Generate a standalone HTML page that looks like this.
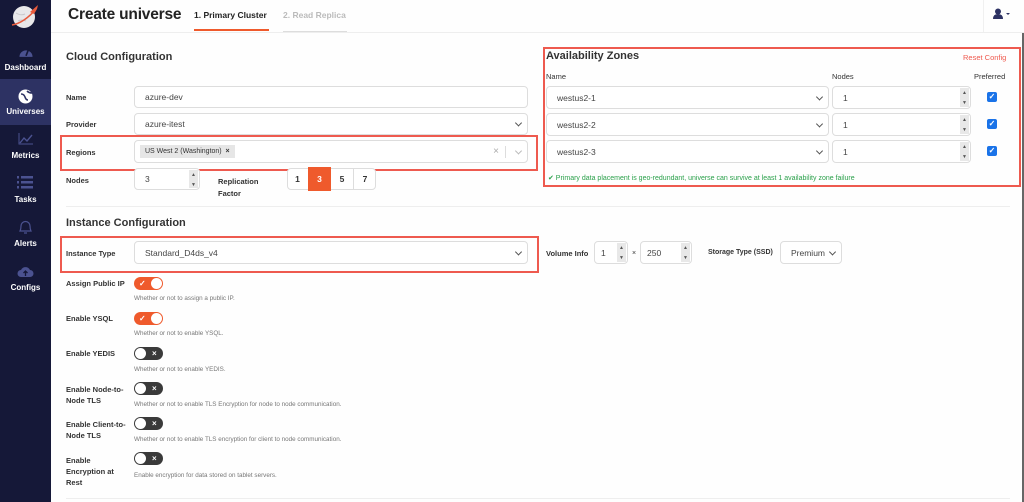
<!DOCTYPE html>
<html><head><meta charset="utf-8"><style>
*{box-sizing:border-box;margin:0;padding:0}
body{width:1024px;height:502px;overflow:hidden;background:#fefefe;font-family:"Liberation Sans",sans-serif;color:#333;position:relative}
.a{position:absolute}
.sb{left:0;top:0;width:51px;height:502px;background:#151838}
.ni{position:absolute;left:0;width:51px;text-align:center;color:#fff;font-size:8px;font-weight:bold}
.lbl{position:absolute;font-size:7.5px;font-weight:bold;color:#333}
.inp{position:absolute;border:1px solid #ddd;border-radius:4px;background:#fff;font-size:8.5px;color:#444;padding-left:10px;display:flex;align-items:center}
.chev{position:absolute;right:6px;top:50%;width:5px;height:5px;border-right:1.3px solid #555;border-bottom:1.3px solid #555;transform:translateY(-70%) rotate(45deg)}
.spin{position:absolute;right:1px;top:1px;bottom:1px;width:9px;background:#e8e8e8;font-size:5px;color:#555;text-align:center;line-height:10px}
.red{position:absolute;border:2px solid #ee5a4f}
.tg{position:absolute;width:29px;height:13px;border-radius:7px}
.tg.on{background:#ef5a2c}.tg.off{background:#3a3a3a}
.tg .k{position:absolute;top:1px;width:11px;height:11px;border-radius:50%;background:#fff}
.tg.on .k{right:1px}.tg.off .k{left:1px}
.tg span{position:absolute;top:0;font-size:8px;color:#fff;font-weight:bold;line-height:13px}
.desc{position:absolute;left:134px;font-size:6.3px;color:#777}
.cb{position:absolute;left:987px;width:10px;height:10px;background:#1a73e8;border-radius:2px;color:#fff;font-size:8px;line-height:10px;text-align:center;font-weight:bold}
</style></head><body>
<div class="a sb"></div>
<div class="a" style="left:0;top:79px;width:51px;height:46px;background:#2d3263"></div>
<svg class="a" style="left:10px;top:3px" width="32" height="28" viewBox="0 0 32 28"><circle cx="14" cy="14" r="11" fill="#e8e8ea"/><path d="M6 10q5 3 9 1 M8 18q4-2 8 0" stroke="#c8c8cc" fill="none"/><path d="M2 22 Q14 20 26 6" stroke="#e85a3c" stroke-width="1.5" fill="none"/><path d="M20 9 L28 2 L27 6 L24 11z" fill="#e85a3c"/></svg>
<svg class="a" style="left:18px;top:46px" width="16" height="12" viewBox="0 0 14 11"><path d="M1 10 A6 6 0 1 1 13 10z" fill="#4b5290"/><path d="M7 9 L9 4" stroke="#151838" stroke-width="1.5"/></svg>
<div class="ni" style="top:63px">Dashboard</div>
<svg class="a" style="left:18px;top:89px" width="15" height="15"><circle cx="7.5" cy="7.5" r="7" fill="#fff"/><path d="M3 5q3 0 4 3t3 3M9 2q2 2 5 2" stroke="#2d3263" stroke-width="1.6" fill="none"/></svg>
<div class="ni" style="top:107px">Universes</div>
<svg class="a" style="left:18px;top:133px" width="16" height="12"><path d="M1 0V11H15" stroke="#4b5290" fill="none"/><path d="M2 10 L6 5 L9 8 L14 2" stroke="#4b5290" stroke-width="1.4" fill="none"/></svg>
<div class="ni" style="top:151px">Metrics</div>
<svg class="a" style="left:17px;top:176px" width="16" height="13"><g fill="#4b5290"><rect x="0" y="0" width="2" height="2.5"/><rect x="4" y="0" width="12" height="2.5"/><rect x="0" y="5" width="2" height="2.5"/><rect x="4" y="5" width="12" height="2.5"/><rect x="0" y="10" width="2" height="2.5"/><rect x="4" y="10" width="12" height="2.5"/></g></svg>
<div class="ni" style="top:195px">Tasks</div>
<svg class="a" style="left:18px;top:220px" width="15" height="15"><path d="M2 11 Q3 9 3 6 A4.5 4.5 0 0 1 12 6 Q12 9 13 11z M6 13h3" stroke="#4b5290" fill="none" stroke-width="1.2"/></svg>
<div class="ni" style="top:239px">Alerts</div>
<svg class="a" style="left:17px;top:265px" width="17" height="13"><path d="M4 12 A3.5 3.5 0 0 1 4 5 A5 5 0 0 1 13 5 A3.5 3.5 0 0 1 13 12z" fill="#4b5290"/><path d="M8.5 11V6 M6.5 8l2-2 2 2" stroke="#151838" stroke-width="1.3" fill="none"/></svg>
<div class="ni" style="top:283px">Configs</div>

<div class="a" style="left:51px;top:32px;width:973px;height:1px;background:#eee"></div>
<div class="a" style="left:68px;top:6px;font-size:15.5px;font-weight:bold;color:#222;letter-spacing:-0.2px">Create universe</div>
<div class="a" style="left:194px;top:10px;font-size:8.5px;font-weight:bold;color:#222">1. Primary Cluster</div>
<div class="a" style="left:194px;top:29px;width:75px;height:2px;background:#ef5a2c"></div>
<div class="a" style="left:283px;top:10px;font-size:8.5px;font-weight:bold;color:#bbb">2. Read Replica</div>
<div class="a" style="left:283px;top:31px;width:64px;height:1px;background:#ddd"></div>
<div class="a" style="left:983px;top:0;width:1px;height:32px;background:#f0f0f0"></div>
<svg class="a" style="left:993px;top:8px" width="18" height="12"><circle cx="5" cy="3.5" r="3" fill="#2d3263"/><path d="M0 11 Q0 6 5 6 Q10 6 10 11z" fill="#2d3263"/><path d="M13 5h4l-2 2z" fill="#2d3263"/></svg>
<div class="a" style="left:1022px;top:33px;width:2px;height:469px;background:#666"></div>

<div class="a" style="left:66px;top:51px;font-size:11px;font-weight:bold;color:#333">Cloud Configuration</div>
<div class="lbl" style="left:66px;top:93px">Name</div>
<div class="inp" style="left:134px;top:86px;width:394px;height:22px">azure-dev</div>
<div class="lbl" style="left:66px;top:120px">Provider</div>
<div class="inp" style="left:134px;top:113px;width:394px;height:22px">azure-itest<i class="chev"></i></div>
<div class="lbl" style="left:66px;top:148px">Regions</div>
<div class="inp" style="left:134px;top:140px;width:394px;height:23px;padding-left:5px"><span style="background:#e6e6e6;padding:3px 5px;font-size:7px;color:#333">US West 2 (Washington) &nbsp;<b>×</b></span><span style="position:absolute;right:28px;color:#aaa;font-size:10px">×</span><span style="position:absolute;right:21px;top:5px;width:1px;height:12px;background:#ddd"></span><i class="chev" style="border-color:#bbb"></i></div>
<div class="red" style="left:60px;top:135px;width:478px;height:36px"></div>
<div class="lbl" style="left:66px;top:176px">Nodes</div>
<div class="inp" style="left:134px;top:168px;width:66px;height:22px">3<div class="spin">▲<br>▼</div></div>
<div class="lbl" style="left:218px;top:176px;line-height:12px">Replication<br>Factor</div>
<div class="a" style="left:287px;top:168px;width:89px;height:22px;border:1px solid #ddd;border-radius:4px;background:#fff"></div>
<div class="a" style="left:287px;top:168px;width:21px;height:22px;line-height:22px;text-align:center;font-size:8.5px;font-weight:bold">1</div>
<div class="a" style="left:308px;top:167px;width:23px;height:24px;line-height:24px;text-align:center;font-size:8.5px;font-weight:bold;background:#ef5a2c;color:#fff">3</div>
<div class="a" style="left:331px;top:168px;width:22px;height:22px;line-height:22px;text-align:center;font-size:8.5px;font-weight:bold">5</div>
<div class="a" style="left:353px;top:168px;width:1px;height:22px;background:#ddd"></div>
<div class="a" style="left:354px;top:168px;width:22px;height:22px;line-height:22px;text-align:center;font-size:8.5px;font-weight:bold">7</div>

<div class="a" style="left:66px;top:206px;width:944px;height:1px;background:#eee"></div>

<div class="a" style="left:546px;top:50px;font-size:11px;font-weight:bold;color:#333">Availability Zones</div>
<div class="a" style="left:963px;top:53px;font-size:7.5px;color:#ef5a4f">Reset Config</div>
<div class="lbl" style="left:546px;top:72px;font-weight:normal;color:#333">Name</div>
<div class="lbl" style="left:832px;top:72px;font-weight:normal">Nodes</div>
<div class="lbl" style="left:974px;top:72px;font-weight:normal">Preferred</div>
<div class="inp" style="left:546px;top:86px;width:283px;height:23px">westus2-1<i class="chev"></i></div>
<div class="inp" style="left:832px;top:86px;width:139px;height:23px">1<div class="spin">▲<br>▼</div></div>
<div class="cb" style="top:92px">✓</div>
<div class="inp" style="left:546px;top:113px;width:283px;height:23px">westus2-2<i class="chev"></i></div>
<div class="inp" style="left:832px;top:113px;width:139px;height:23px">1<div class="spin">▲<br>▼</div></div>
<div class="cb" style="top:119px">✓</div>
<div class="inp" style="left:546px;top:140px;width:283px;height:23px">westus2-3<i class="chev"></i></div>
<div class="inp" style="left:832px;top:140px;width:139px;height:23px">1<div class="spin">▲<br>▼</div></div>
<div class="cb" style="top:146px">✓</div>
<div class="a" style="left:548px;top:174px;font-size:7px;color:#2aa04a">✔ Primary data placement is geo-redundant, universe can survive at least 1 availability zone failure</div>
<div class="red" style="left:543px;top:47px;width:478px;height:140px"></div>

<div class="a" style="left:66px;top:217px;font-size:11px;font-weight:bold;color:#333">Instance Configuration</div>
<div class="lbl" style="left:66px;top:249px">Instance Type</div>
<div class="inp" style="left:134px;top:241px;width:394px;height:23px">Standard_D4ds_v4<i class="chev"></i></div>
<div class="red" style="left:60px;top:236px;width:479px;height:37px"></div>
<div class="lbl" style="left:546px;top:249px">Volume Info</div>
<div class="inp" style="left:594px;top:241px;width:34px;height:23px;padding-left:6px">1<div class="spin">▲<br>▼</div></div>
<div class="a" style="left:632px;top:250px;font-size:7px">×</div>
<div class="inp" style="left:640px;top:241px;width:52px;height:23px;padding-left:6px">250<div class="spin">▲<br>▼</div></div>
<div class="lbl" style="left:708px;top:249px;font-size:7px">Storage Type (SSD)</div>
<div class="inp" style="left:780px;top:241px;width:62px;height:23px;padding-left:10px">Premium<i class="chev"></i></div>

<div class="lbl" style="left:66px;top:279px">Assign Public IP</div>
<div class="tg on" style="left:134px;top:277px"><span style="left:5px">✓</span><div class="k"></div></div>
<div class="desc" style="top:295px">Whether or not to assign a public IP.</div>
<div class="lbl" style="left:66px;top:314px">Enable YSQL</div>
<div class="tg on" style="left:134px;top:312px"><span style="left:5px">✓</span><div class="k"></div></div>
<div class="desc" style="top:330px">Whether or not to enable YSQL.</div>
<div class="lbl" style="left:66px;top:349px">Enable YEDIS</div>
<div class="tg off" style="left:134px;top:347px"><div class="k"></div><span style="left:18px">×</span></div>
<div class="desc" style="top:366px">Whether or not to enable YEDIS.</div>
<div class="lbl" style="left:66px;top:384px;line-height:11px">Enable Node-to-<br>Node TLS</div>
<div class="tg off" style="left:134px;top:382px"><div class="k"></div><span style="left:18px">×</span></div>
<div class="desc" style="top:401px">Whether or not to enable TLS Encryption for node to node communication.</div>
<div class="lbl" style="left:66px;top:419px;line-height:11px">Enable Client-to-<br>Node TLS</div>
<div class="tg off" style="left:134px;top:417px"><div class="k"></div><span style="left:18px">×</span></div>
<div class="desc" style="top:436px">Whether or not to enable TLS encryption for client to node communication.</div>
<div class="lbl" style="left:66px;top:455px;line-height:11px">Enable<br>Encryption at<br>Rest</div>
<div class="tg off" style="left:134px;top:452px"><div class="k"></div><span style="left:18px">×</span></div>
<div class="desc" style="top:472px">Enable encryption for data stored on tablet servers.</div>
<div class="a" style="left:66px;top:498px;width:944px;height:1px;background:#eee"></div>
</body></html>
